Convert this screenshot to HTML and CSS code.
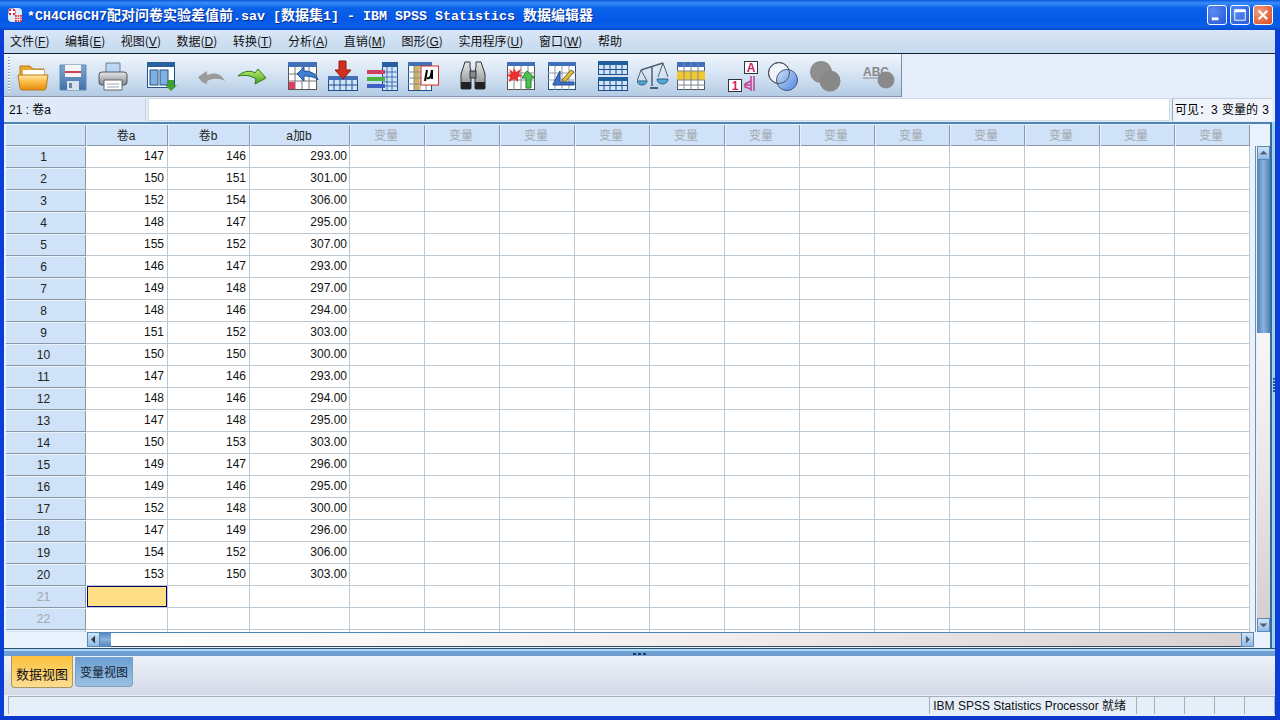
FILE: index.html
```html
<!DOCTYPE html>
<html lang="zh">
<head>
<meta charset="utf-8">
<title>数据编辑器</title>
<link rel="stylesheet" href="styles.css">
</head>
<body>
<svg class="defs" aria-hidden="true">
  <defs>
    <linearGradient id="orange" x1="0" y1="0" x2="0" y2="1"><stop offset="0" stop-color="#ffe9a8"/><stop offset=".5" stop-color="#fbb840"/><stop offset="1" stop-color="#e88a10"/></linearGradient>
    <linearGradient id="blue" x1="0" y1="0" x2="0" y2="1"><stop offset="0" stop-color="#7fa8d0"/><stop offset="1" stop-color="#3f70a8"/></linearGradient>
    <linearGradient id="grey" x1="0" y1="0" x2="0" y2="1"><stop offset="0" stop-color="#e8e8e8"/><stop offset="1" stop-color="#7f858c"/></linearGradient>
    <linearGradient id="green" x1="0" y1="0" x2="0" y2="1"><stop offset="0" stop-color="#c8f070"/><stop offset="1" stop-color="#40a020"/></linearGradient>
    <linearGradient id="sphere" x1="0" y1="0" x2="1" y2="1"><stop offset="0" stop-color="#cfe0fa"/><stop offset="1" stop-color="#4f86e0"/></linearGradient>
  </defs>
</svg>
<div class="window">
  <header class="titlebar">
    <svg class="appicon" viewBox="0 0 16 16"><rect x="1" y="1" width="14" height="14" rx="4" fill="#dfe9f8"/><circle cx="5" cy="5" r="3.6" fill="#c02038"/><rect x="4" y="2" width="2" height="7" fill="#fff"/><rect x="2" y="4" width="6" height="2" fill="#fff"/><rect x="8" y="8" width="7" height="7" fill="#d03048"/><path d="M8 10.300h7M8 12.600h7M10.300 8v7M12.600 8v7" stroke="#fff" stroke-width=".8"/></svg>
    <div class="title">*CH4CH6CH7<span class="cjk">配对问卷实验差值前</span>.sav [<span class="cjk">数据集</span>1] - IBM SPSS Statistics <span class="cjk">数据编辑器</span></div>
    <div class="winbtns">
      <span class="winbtn"><svg viewBox="0 0 19 19"><rect x="4" y="12" width="7" height="3" fill="#fff"/></svg></span>
      <span class="winbtn"><svg viewBox="0 0 19 19"><rect x="4" y="4" width="11" height="11" fill="none" stroke="#fff"/><rect x="4" y="4" width="11" height="2.500" fill="#fff"/></svg></span>
      <span class="winbtn close"><svg viewBox="0 0 19 19"><path d="M5 5l9 9M14 5l-9 9" stroke="#fff" stroke-width="2.200"/></svg></span>
    </div>
  </header>
  <nav class="menubar">
    <span>文件(<u>F</u>)</span><span>编辑(<u>E</u>)</span><span>视图(<u>V</u>)</span><span>数据(<u>D</u>)</span><span>转换(<u>T</u>)</span><span>分析(<u>A</u>)</span><span>直销(<u>M</u>)</span><span>图形(<u>G</u>)</span><span>实用程序(<u>U</u>)</span><span>窗口(<u>W</u>)</span><span>帮助</span>
  </nav>
  <div class="toolrow">
    <div class="toolbar">
      <span class="grip"></span>
      <svg class="tool" viewBox="0 0 32 32"><path d="M3 9V6h10l3 3h11v7H3z" fill="#e8a830" stroke="#b87810"/><rect x="6" y="10" width="21" height="6" fill="#fff"/><path d="M1 15h30l-2 13a2 2 0 0 1-2 2H5a2 2 0 0 1-2-2z" fill="url(#orange)" stroke="#b87810"/></svg>
      <svg class="tool t8" viewBox="0 0 32 32"><path d="M3 5h26v25H3z" fill="url(#blue)" stroke="#5f88b0"/><rect x="8" y="5" width="16" height="12" fill="#f4f4f4"/><rect x="8" y="11" width="16" height="2" fill="#d04060"/><rect x="10" y="21" width="12" height="9" fill="#d8e0e8"/><rect x="12" y="23" width="3" height="5" fill="#5f88b0"/></svg>
      <svg class="tool t8" viewBox="0 0 32 32"><path d="M9 3h14v10H9z" fill="#bcd8f4" stroke="#6f7f8f"/><rect x="2" y="12" width="28" height="13" rx="3" fill="url(#grey)" stroke="#50575f"/><path d="M7 20h18v10H7z" fill="#fff" stroke="#60676f"/><path d="M10 24h12M10 27h12" stroke="#a0a8b0"/></svg>
      <svg class="tool t17" viewBox="0 0 32 32"><rect x="1.500" y="2.500" width="27" height="25" fill="#fff" stroke="#25508a"/><rect x="1" y="2" width="28" height="5" fill="#2a5f9e"/><rect x="4" y="10" width="8" height="15" fill="#7fb0e0" stroke="#25508a"/><rect x="14" y="10" width="8" height="15" fill="#7fb0e0" stroke="#25508a"/><path d="M22 20h6v5h3l-6 6-6-6h3z" fill="#40a030"/></svg>
      <svg class="tool t17" viewBox="0 0 32 32"><path d="M3 17l9-6v4c7-3 14-2 18 6-6-3-12-3-18 0v3l-5-2z" fill="#9a9a9a"/></svg>
      <svg class="tool t9" viewBox="0 0 32 32"><path d="M2 16c5-5 13-6 17-3l3-4 8 9-11 6 1-5c-6-4-11-4-18-3z" fill="url(#green)" stroke="#2f7a20"/></svg>
      <svg class="tool t19" viewBox="0 0 32 32"><rect x="1.500" y="2.500" width="28" height="27" fill="#fff" stroke="#555"/><rect x="1" y="2" width="29" height="5" fill="#3f70b8"/><path d="M8 7v22M15 7v22M22 7v22M1 14h29M1 21h29" stroke="#777"/><rect x="2" y="22" width="6" height="7" fill="#e04060"/><path d="M10 14l7-7v4c6 0 12 2 14 9-3-3-8-4-14-4v5z" fill="#3f80d0" stroke="#204f90"/></svg>
      <svg class="tool t8" viewBox="0 0 32 32"><rect x="1.500" y="16.500" width="29" height="14" fill="#d0e4f8" stroke="#204f90"/><rect x="1" y="16" width="30" height="4" fill="#3f70b8"/><path d="M7 20v10M13 20v10M19 20v10M25 20v10M1 25h30" stroke="#204f90"/><path d="M12 1h7v9h5l-8 9-8-9h4z" fill="#d03020" stroke="#901810"/></svg>
      <svg class="tool t7" viewBox="0 0 32 32"><rect x="16.500" y="2.500" width="15" height="28" fill="#d0e4f8" stroke="#204f90"/><rect x="16" y="2" width="16" height="5" fill="#2a5f9e"/><path d="M21 7v23M26 7v23M16 12h16M16 17h16M16 22h16M16 26h16" stroke="#3f70b8"/><path d="M1 10h18v4H1z" fill="#d04060"/><path d="M1 17h18v4H1z" fill="#50b040"/><path d="M1 24h18v4H1z" fill="#4060c0"/></svg>
      <svg class="tool t9" viewBox="0 0 32 32"><rect x="1.500" y="2.500" width="23" height="28" fill="#fff" stroke="#204f90"/><rect x="1" y="2" width="24" height="4" fill="#3f70b8"/><rect x="7" y="6" width="5" height="24" fill="#d8b050"/><path d="M7 6v24M13 6v24M19 6v24M1 12h24M1 18h24M1 24h24" stroke="#7f8f9f"/><rect x="14" y="6" width="17.500" height="19" fill="#fff" stroke="#d03020"/><path d="M20 10l-2 11M20 18c3 1 4-1 5-8M25 10v9" stroke="#000" stroke-width="2" fill="none"/></svg>
      <svg class="tool t18" viewBox="0 0 32 32"><path d="M8 2h5v5l1 4v17a1 1 0 0 1-1 1H5a1 1 0 0 1-1-1V14z" fill="url(#grey)" stroke="#333"/><path d="M24 2h-5v5l-1 4v17a1 1 0 0 0 1 1h8a1 1 0 0 0 1-1V14z" fill="url(#grey)" stroke="#333"/><rect x="13" y="11" width="6" height="7" fill="#888" stroke="#333"/><rect x="4" y="22" width="10" height="7" fill="#222"/><rect x="18" y="22" width="10" height="7" fill="#222"/></svg>
      <svg class="tool t16" viewBox="0 0 32 32"><rect x="2.500" y="2.500" width="27" height="27" fill="#fff" stroke="#555"/><rect x="2" y="2" width="28" height="4" fill="#3f70b8"/><path d="M9 6v24M16 6v24M23 6v24M2 13h28M2 20h28" stroke="#888"/><path d="M9 8l2 4 5-3-2 5 4 2-5 1 0 5-4-3-5 3 1-5-4-2 5-1-2-5 4 3z" fill="#e83030"/><path d="M22 11l8 7h-4v10h-5V18h-4z" fill="#50c050" stroke="#208030"/></svg>
      <svg class="tool t9" viewBox="0 0 32 32"><rect x="2.500" y="2.500" width="27" height="27" fill="#fff" stroke="#204f90"/><rect x="2" y="2" width="28" height="4" fill="#3f70b8"/><path d="M9 6v24M16 6v24M23 6v24M2 13h28M2 20h28" stroke="#99a"/><path d="M7 24l7-13v11h14v3H7z" fill="#3f70c8" stroke="#204f90"/><path d="M16 20l9-10 3 2-9 10z" fill="#d8c040" stroke="#806020"/></svg>
      <svg class="tool t19" viewBox="0 0 32 32"><rect x="1.500" y="1.500" width="29" height="13" fill="#d0e4f8" stroke="#204f90"/><rect x="1" y="1" width="30" height="4" fill="#205f9e"/><path d="M7 5v9M13 5v9M19 5v9M25 5v9M1 9.500h30" stroke="#204f90"/><rect x="1.500" y="17.500" width="29" height="13" fill="#d0e4f8" stroke="#204f90"/><rect x="1" y="17" width="30" height="4" fill="#205f9e"/><path d="M7 21v9M13 21v9M19 21v9M25 21v9M1 25.500h30" stroke="#204f90"/></svg>
      <svg class="tool t8" viewBox="0 0 32 32"><path d="M4 10L26 3M15 6v20" stroke="#506070" stroke-width="1.500"/><path d="M4 10l-4 11M4 10l6 11M26 3l-5 14M26 3l5 14" stroke="#506070" fill="none"/><path d="M0 21h10a5 4 0 0 1-10 0z" fill="#4fa8d8" stroke="#306080"/><path d="M20 19h11a5.500 5 0 0 1-11 0z" fill="#4fa8d8" stroke="#306080"/><path d="M13 28h8" stroke="#506070" stroke-width="2"/></svg>
      <svg class="tool t6" viewBox="0 0 32 32"><rect x="2.500" y="2.500" width="27" height="27" fill="#fff" stroke="#505860"/><rect x="2" y="2" width="28" height="5" fill="#3f70c0"/><rect x="2" y="11" width="28" height="9" fill="#f0c830"/><path d="M9 2v28M16 2v28M23 2v28M2 11h28M2 20h28M2 25h28" stroke="#808890"/></svg>
      <svg class="tool t20" viewBox="0 0 32 32"><rect x="1.500" y="19.500" width="13" height="12" fill="#fff" stroke="#333"/><text class="glyph" x="8" y="30" text-anchor="middle" fill="#d02060">1</text><rect x="17.500" y="1.500" width="13" height="12" fill="#fff" stroke="#333"/><text class="glyph" x="24" y="12" text-anchor="middle" fill="#d02060">A</text><path d="M24 16v15M27 16v15M24 25h-6M24 21l-6 3v3l6 2" stroke="#c04090" stroke-width="1.500" fill="none"/></svg>
      <svg class="tool t8" viewBox="0 0 32 32"><circle cx="12" cy="13" r="10.500" fill="#f0f4fa" stroke="#505860"/><circle cx="20" cy="20" r="10.500" fill="url(#sphere)" stroke="#405880"/><circle cx="12" cy="13" r="10.500" fill="none" stroke="#505860"/></svg>
      <svg class="tool t10" viewBox="0 0 32 32"><circle cx="12" cy="12" r="11" fill="#8f8f8f"/><circle cx="21" cy="21" r="10.500" fill="#888"/></svg>
      <svg class="tool t22" viewBox="0 0 32 32"><text class="abc" x="0" y="16" fill="#8a8a8a">ABC</text><path d="M0 18h24" stroke="#8a8a8a"/><circle cx="23" cy="20" r="8.500" fill="#8a8a8a"/></svg>
    </div>
  </div>
  <div class="formulabar">
    <div class="cellname">21 : 卷a</div>
    <div class="cellinput"></div>
    <div class="visible">可见：3 变量的 3</div>
  </div>
  <div class="workarea">
    <section class="sheet">
      <div class="gridclip">
        <table class="grid">
          <colgroup><col class="c-row"><col class="c-num"><col class="c-num"><col class="c-sum"><col class="c-var"><col class="c-var"><col class="c-var"><col class="c-var"><col class="c-var"><col class="c-var"><col class="c-var"><col class="c-var"><col class="c-var"><col class="c-var"><col class="c-var"><col class="c-var"></colgroup>
          <thead><tr><th class="corner"></th><th>卷a</th><th>卷b</th><th>a加b</th><th class="off">变量</th><th class="off">变量</th><th class="off">变量</th><th class="off">变量</th><th class="off">变量</th><th class="off">变量</th><th class="off">变量</th><th class="off">变量</th><th class="off">变量</th><th class="off">变量</th><th class="off">变量</th><th class="off">变量</th></tr></thead>
          <tbody>
<tr><th>1</th><td>147</td><td>146</td><td>293.00</td><td></td><td></td><td></td><td></td><td></td><td></td><td></td><td></td><td></td><td></td><td></td><td></td></tr>
<tr><th>2</th><td>150</td><td>151</td><td>301.00</td><td></td><td></td><td></td><td></td><td></td><td></td><td></td><td></td><td></td><td></td><td></td><td></td></tr>
<tr><th>3</th><td>152</td><td>154</td><td>306.00</td><td></td><td></td><td></td><td></td><td></td><td></td><td></td><td></td><td></td><td></td><td></td><td></td></tr>
<tr><th>4</th><td>148</td><td>147</td><td>295.00</td><td></td><td></td><td></td><td></td><td></td><td></td><td></td><td></td><td></td><td></td><td></td><td></td></tr>
<tr><th>5</th><td>155</td><td>152</td><td>307.00</td><td></td><td></td><td></td><td></td><td></td><td></td><td></td><td></td><td></td><td></td><td></td><td></td></tr>
<tr><th>6</th><td>146</td><td>147</td><td>293.00</td><td></td><td></td><td></td><td></td><td></td><td></td><td></td><td></td><td></td><td></td><td></td><td></td></tr>
<tr><th>7</th><td>149</td><td>148</td><td>297.00</td><td></td><td></td><td></td><td></td><td></td><td></td><td></td><td></td><td></td><td></td><td></td><td></td></tr>
<tr><th>8</th><td>148</td><td>146</td><td>294.00</td><td></td><td></td><td></td><td></td><td></td><td></td><td></td><td></td><td></td><td></td><td></td><td></td></tr>
<tr><th>9</th><td>151</td><td>152</td><td>303.00</td><td></td><td></td><td></td><td></td><td></td><td></td><td></td><td></td><td></td><td></td><td></td><td></td></tr>
<tr><th>10</th><td>150</td><td>150</td><td>300.00</td><td></td><td></td><td></td><td></td><td></td><td></td><td></td><td></td><td></td><td></td><td></td><td></td></tr>
<tr><th>11</th><td>147</td><td>146</td><td>293.00</td><td></td><td></td><td></td><td></td><td></td><td></td><td></td><td></td><td></td><td></td><td></td><td></td></tr>
<tr><th>12</th><td>148</td><td>146</td><td>294.00</td><td></td><td></td><td></td><td></td><td></td><td></td><td></td><td></td><td></td><td></td><td></td><td></td></tr>
<tr><th>13</th><td>147</td><td>148</td><td>295.00</td><td></td><td></td><td></td><td></td><td></td><td></td><td></td><td></td><td></td><td></td><td></td><td></td></tr>
<tr><th>14</th><td>150</td><td>153</td><td>303.00</td><td></td><td></td><td></td><td></td><td></td><td></td><td></td><td></td><td></td><td></td><td></td><td></td></tr>
<tr><th>15</th><td>149</td><td>147</td><td>296.00</td><td></td><td></td><td></td><td></td><td></td><td></td><td></td><td></td><td></td><td></td><td></td><td></td></tr>
<tr><th>16</th><td>149</td><td>146</td><td>295.00</td><td></td><td></td><td></td><td></td><td></td><td></td><td></td><td></td><td></td><td></td><td></td><td></td></tr>
<tr><th>17</th><td>152</td><td>148</td><td>300.00</td><td></td><td></td><td></td><td></td><td></td><td></td><td></td><td></td><td></td><td></td><td></td><td></td></tr>
<tr><th>18</th><td>147</td><td>149</td><td>296.00</td><td></td><td></td><td></td><td></td><td></td><td></td><td></td><td></td><td></td><td></td><td></td><td></td></tr>
<tr><th>19</th><td>154</td><td>152</td><td>306.00</td><td></td><td></td><td></td><td></td><td></td><td></td><td></td><td></td><td></td><td></td><td></td><td></td></tr>
<tr><th>20</th><td>153</td><td>150</td><td>303.00</td><td></td><td></td><td></td><td></td><td></td><td></td><td></td><td></td><td></td><td></td><td></td><td></td></tr>
<tr><th class="off">21</th><td class="active"></td><td></td><td></td><td></td><td></td><td></td><td></td><td></td><td></td><td></td><td></td><td></td><td></td><td></td><td></td></tr>
<tr><th class="off">22</th><td></td><td></td><td></td><td></td><td></td><td></td><td></td><td></td><td></td><td></td><td></td><td></td><td></td><td></td><td></td></tr>
<tr><th class="off"></th><td></td><td></td><td></td><td></td><td></td><td></td><td></td><td></td><td></td><td></td><td></td><td></td><td></td><td></td><td></td></tr>
          </tbody>
        </table>
      </div>
      <div class="vbar">
        <span class="sbtn"><svg viewBox="0 0 14 14"><path d="M7 4l5 5H2z" fill="#50606f"/></svg></span>
        <span class="vthumb"></span>
        <span class="vtrack"></span>
        <span class="sbtn"><svg viewBox="0 0 14 14"><path d="M7 10l5-5H2z" fill="#50606f"/></svg></span>
      </div>
      <div class="hbar">
        <span class="sbtn wide"><svg viewBox="0 0 14 14"><path d="M4 7l5-5v10z" fill="#303840"/></svg></span>
        <span class="hthumb"></span>
        <span class="htrack"></span>
        <span class="sbtn wide"><svg viewBox="0 0 14 14"><path d="M10 7L5 2v10z" fill="#50606f"/></svg></span>
      </div>
      <div class="sheetcorner"></div>
    </section>
    <div class="vsplit"><i></i></div>
  </div>
  <div class="hsplit"><i></i></div>
  <div class="tabs">
    <span class="tab on">数据视图</span>
    <span class="tab">变量视图</span>
  </div>
  <footer class="status">
    <span class="s-main"></span>
    <span class="s-proc">IBM SPSS Statistics Processor 就绪</span>
    <span class="s-a"></span><span class="s-b"></span><span class="s-c"></span><span class="s-c"></span><span class="s-c"></span>
  </footer>
</div>
</body>
</html>
```
FILE: styles.css
```css
* { box-sizing: border-box; }
html, body { margin: 0; height: 100%; overflow: hidden; }
body { font: 12px/1 "Liberation Sans", "Noto Sans CJK SC", sans-serif; color: #000; background: #0a3fd0; }
.defs { display: block; width: 0; height: 0; }

.window { width: 1280px; height: 720px; display: flex; flex-direction: column; background: #e6effa; border-left: 4px solid #0b3ed6; border-right: 5px solid #0b3ed6; border-bottom: 4px solid #0a38c8; }

.titlebar { height: 30px; margin: 0 -5px 0 -4px; padding: 0 3px 0 7px; display: flex; align-items: center; background: linear-gradient(#0a5ae0 0, #3a8cf8 3px, #0a62ea 8px, #0558e6 20px, #0a60ea 26px, #0a48cc 30px); }
.appicon { width: 16px; height: 16px; flex: none; }
.title { margin-left: 4px; font: bold 13.33px/1 "Liberation Mono", monospace; color: #fff; text-shadow: 1px 1px 0 #0a2f90; white-space: pre; }
.cjk { font: bold 14px/1 "Noto Sans CJK SC", sans-serif; }
.winbtns { margin-left: auto; display: flex; gap: 3px; padding-right: 4px; }
.winbtn { width: 20px; height: 20px; border: 1px solid #fff; border-radius: 3px; background: radial-gradient(circle at 30% 30%, #5a8cf0, #2458d8); display: block; }
.winbtn svg { display: block; width: 18px; height: 18px; }
.winbtn.close { background: radial-gradient(circle at 30% 30%, #f0a080, #d84820); }

.menubar { height: 24px; padding: 0 0 1px 6px; display: flex; align-items: center; gap: 15.6px; background: linear-gradient(#d9e6f5, #c4d9ee); border-bottom: 1px solid #10202f; font-family: "Noto Sans CJK SC", "Liberation Sans", sans-serif; color: #111; }
.menubar u { text-decoration: underline; font-family: "Liberation Sans", sans-serif; }

.toolrow { height: 43px; background: #e4edf9; }
.toolbar { width: 898px; height: 43px; padding: 6px 0 0 4px; display: flex; align-items: flex-start; background: linear-gradient(#f0f5fc, #d4e3f3 50%, #b3cbe3); border-right: 1px solid #7c8ea0; border-bottom: 1px solid #8898a8; }
.grip { flex: none; width: 2px; height: 36px; margin-top: -3px; background: repeating-linear-gradient(#8f9fb0 0 1px, #fff 1px 2px, transparent 2px 3px); }
.tool { width: 32px; height: 32px; flex: none; margin-left: 7px; }
.t6 { margin-left: 6px; }
.t7 { margin-left: 7px; }
.t8 { margin-left: 8px; }
.t9 { margin-left: 9px; }
.t10 { margin-left: 10px; }
.t16 { margin-left: 16px; }
.t17 { margin-left: 17px; }
.t18 { margin-left: 18px; }
.t19 { margin-left: 19px; }
.t20 { margin-left: 20px; }
.t22 { margin-left: 22px; }
.glyph { font: bold 12px "Liberation Sans", sans-serif; }
.abc { font: bold 12px "Liberation Sans", sans-serif; }

.formulabar { height: 25px; padding: 1px 3px 1px 1px; display: flex; gap: 2px; background: #e4edf9; }
.cellname { width: 141px; padding-left: 4px; display: flex; align-items: center; background: #dfe9f7; border-right: 1px solid #c4d0dc; }
.cellinput { flex: 1; background: #fff; border: 1px solid #d0dae6; }
.visible { width: 100px; padding-left: 2px; display: flex; align-items: center; background: #f0f5fc; border-left: 1px solid #9aa8b6; border-top: 1px solid #c4d0dc; white-space: pre; word-spacing: 1px; }

.workarea { height: 526px; display: flex; }
.sheet { width: 1268px; padding-left: 1px; display: grid; grid-template-columns: 1250px 1fr; grid-template-rows: 508px 16px; border-top: 2px solid #4a84b4; border-right: 2px solid #2f6f9f; background: #e9f2fc; }
.gridclip { overflow: hidden; }
.grid { width: 1245px; table-layout: fixed; border-collapse: separate; border-spacing: 0; }
.c-row { width: 81px; }
.c-num { width: 82px; }
.c-sum { width: 100px; }
.c-var { width: 75px; }
.grid tr { height: 22px; }
.grid th { padding: 0; font-weight: normal; font-size: 12px; color: #222; background: #cfe2f7; border: 1px solid #e9f2fc; border-width: 1px 0 0 1px; box-shadow: inset -1px -1px 0 #8a97a4; }
.grid thead th { padding-right: 3px; }
.grid thead th.off { padding-right: 4px; }
.grid tbody th { padding: 0 5px 2px 0; }
.grid th.off { color: #a3a8ad; }
.grid td { padding: 0 2px 1px 0; text-align: right; background: #fff; border-right: 1px solid #bcc8d2; border-bottom: 1px solid #bcc8d2; color: #111; }
.grid td:nth-child(2), .grid td:nth-child(3) { padding-right: 3px; }
.grid td.active { background: #ffdf85; border-left: 1px solid #fff; box-shadow: inset 0 0 0 1px #000070; }

.vbar { display: flex; flex-direction: column; padding-left: 1px; width: 15px; margin-top: 22px; border-left: 1px solid #6f8fa8; background: #e9f2fc; }
.sbtn { flex: none; height: 14px; width: 13px; background: linear-gradient(#d0e4f8, #90bbe8); border: 1px solid #5a88b0; display: block; }
.sbtn svg { display: block; width: 100%; height: 100%; }
.sbtn.wide { width: 13px; height: 15px; }
.vthumb { flex: none; height: 173px; background: linear-gradient(90deg, #4f82bb, #8ab2dc 50%, #4f82bb); }
.vtrack { flex: 1; background: linear-gradient(#f8f5f8, #ebe6ea 50%, #d6cfd2); }

.hbar { padding-left: 82px; display: flex; background: #e9f2fc; }
.hthumb { flex: none; width: 11px; height: 15px; background: linear-gradient(#4f82bb, #8ab2dc 50%, #4f82bb); }
.htrack { width: 1130px; height: 15px; background: linear-gradient(90deg, #fff, #f3eef0 50%, #d9d2d4); border-top: 1px solid #4a86b8; border-bottom: 1px solid #304a60; }

.vsplit { flex: 1; display: flex; align-items: center; justify-content: center; background: #a8d0e8; }
.vsplit i { display: block; width: 2px; height: 14px; background: repeating-linear-gradient(#305878 0 2px, transparent 2px 3px); }
.hsplit { height: 8px; padding-top: 3px; display: flex; align-items: center; justify-content: center; background: linear-gradient(#2f4f6f 0 1px, #a8dcf8 1px 3px, #6f9fd2 3px 8px); }
.hsplit i { display: block; width: 14px; height: 2px; background: repeating-linear-gradient(90deg, #203858 0 3px, transparent 3px 5px); }

.tabs { height: 39px; padding: 0 0 0 7px; display: flex; align-items: flex-start; gap: 2px; background: linear-gradient(#ecf1fa, #d4dae6); font-family: "Noto Sans CJK SC", sans-serif; }
.tab { width: 58px; height: 30px; margin-top: 1px; display: flex; align-items: center; justify-content: center; background: linear-gradient(#6d9fd2, #9ac0e2); border: 1px solid #7f9fbf; border-top: 0; border-radius: 0 0 4px 4px; color: #123; }
.tab.on { width: 62px; height: 32px; margin-top: 0; padding-top: 3px; font-size: 13px; background: linear-gradient(#fbc23e, #fedd92); border: 1px solid #a89868; border-top: 0; color: #111; }

.status { height: 21px; display: flex; padding: 1px 0 2px 4px; background: #e6eff9; }
.status span { display: flex; align-items: center; border: 1px solid #a6aeb6; border-width: 1px 1px 0 0; color: #111; }
.s-main { width: 923px; border-left-width: 1px !important; }
.s-proc { width: 207px; padding-left: 3px; white-space: pre; }
.s-a { width: 18px; }
.s-b { width: 30px; }
.s-c { width: 30px; }
```
